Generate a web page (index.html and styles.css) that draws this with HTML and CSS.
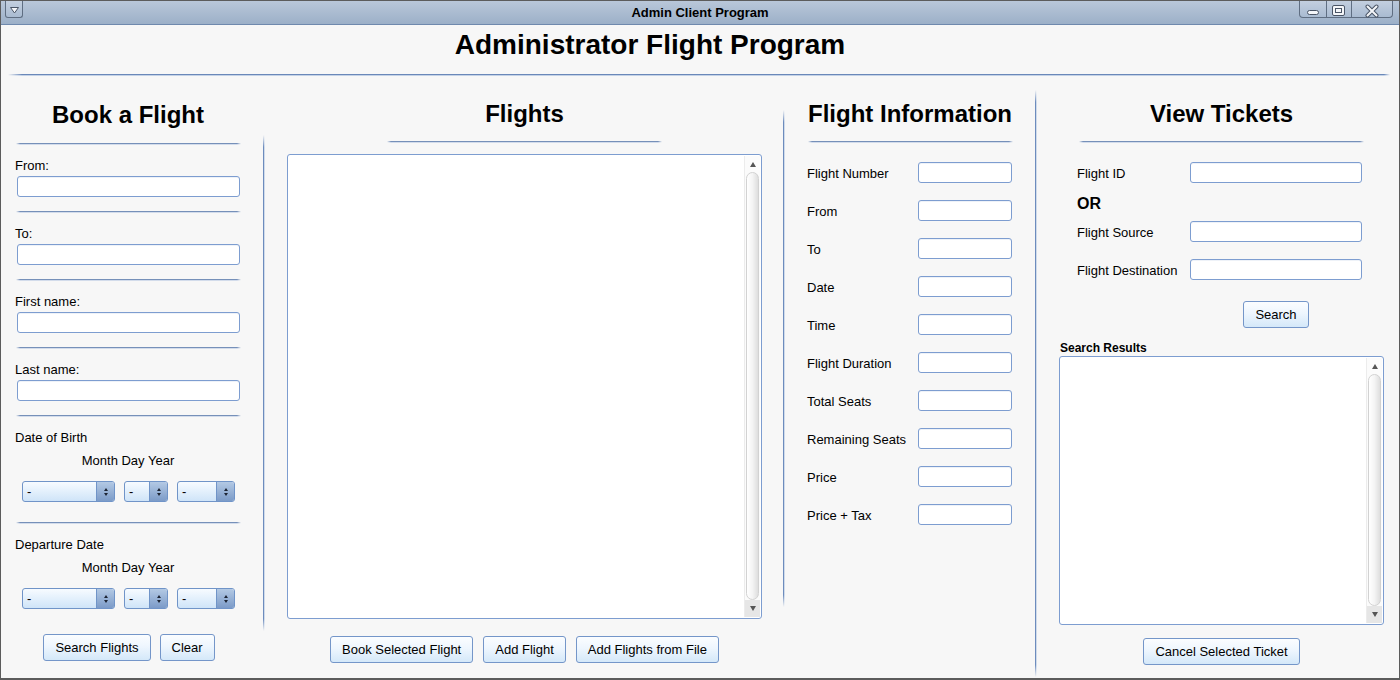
FILE: index.html
```html
<!DOCTYPE html>
<html>
<head>
<meta charset="utf-8">
<title>Admin Client Program</title>
<link rel="stylesheet" href="styles.css">
</head>
<body>
<div class="window">
  <div class="titlebar">
    <div class="tb-left">
      <div class="menu-btn">
        <svg width="16" height="17" viewBox="0 0 16 17"><polygon points="4.5,6.5 12.5,6.5 8.5,12" fill="#f4f6f9" stroke="#4a5566" stroke-width="1"/></svg>
      </div>
    </div>
    <div class="title">Admin Client Program</div>
    <div class="win-ctrls">
      <span class="ctrl c-min"><svg width="26" height="17" viewBox="0 0 26 17"><rect x="7.5" y="9.5" width="11" height="4" rx="2" fill="#f4f6f9" stroke="#4a5566"/></svg></span>
      <span class="ctrl c-max"><svg width="24" height="17" viewBox="0 0 24 17"><rect x="5.5" y="4.5" width="12" height="10" rx="1.5" fill="#f4f6f9" stroke="#4a5566"/><rect x="8.5" y="7.5" width="6" height="4" fill="none" stroke="#4a5566"/></svg></span>
      <span class="ctrl c-close"><svg width="40" height="17" viewBox="0 0 40 17"><path d="M15.5 5.5 L24.5 14.5 M24.5 5.5 L15.5 14.5" stroke="#4a5566" stroke-width="4" stroke-linecap="round"/><path d="M15.5 5.5 L24.5 14.5 M24.5 5.5 L15.5 14.5" stroke="#f4f6f9" stroke-width="2" stroke-linecap="round"/></svg></span>
    </div>
  </div>

  <div class="header">
    <h1>Administrator Flight Program</h1>
    <div class="hline"></div>
  </div>

  <div class="main">
    <section class="col col-book">
      <h2 class="heading">Book a Flight</h2>
      <div class="sep sep-first"></div>
      <div class="lbl">From:</div>
      <div class="inp inp-wide"></div>
      <div class="sep"></div>
      <div class="lbl">To:</div>
      <div class="inp inp-wide"></div>
      <div class="sep"></div>
      <div class="lbl">First name:</div>
      <div class="inp inp-wide"></div>
      <div class="sep"></div>
      <div class="lbl">Last name:</div>
      <div class="inp inp-wide"></div>
      <div class="sep"></div>
      <div class="lbl">Date of Birth</div>
      <div class="mdy">Month Day Year</div>
      <div class="selects">
        <div class="combo c-month"><span class="combo-val">-</span><span class="combo-arrow"><i class="tri-up"></i><i class="tri-down"></i></span></div>
        <div class="combo c-day"><span class="combo-val">-</span><span class="combo-arrow"><i class="tri-up"></i><i class="tri-down"></i></span></div>
        <div class="combo c-year"><span class="combo-val">-</span><span class="combo-arrow"><i class="tri-up"></i><i class="tri-down"></i></span></div>
      </div>
      <div class="sep sep-after-sel"></div>
      <div class="lbl">Departure Date</div>
      <div class="mdy">Month Day Year</div>
      <div class="selects">
        <div class="combo c-month"><span class="combo-val">-</span><span class="combo-arrow"><i class="tri-up"></i><i class="tri-down"></i></span></div>
        <div class="combo c-day"><span class="combo-val">-</span><span class="combo-arrow"><i class="tri-up"></i><i class="tri-down"></i></span></div>
        <div class="combo c-year"><span class="combo-val">-</span><span class="combo-arrow"><i class="tri-up"></i><i class="tri-down"></i></span></div>
      </div>
      <div class="btn-row book-btns">
        <button class="btn">Search Flights</button>
        <button class="btn">Clear</button>
      </div>
    </section>

    <div class="vline v1"></div>

    <section class="col col-flights">
      <h2 class="heading">Flights</h2>
      <div class="sep sep-flights"></div>
      <div class="listbox flights-list">
        <div class="list-body"></div>
        <div class="vscroll">
          <div class="sb-up"><i class="sb-tri-up"></i></div>
          <div class="sb-track"></div>
          <div class="sb-down"><i class="sb-tri-down"></i></div>
        </div>
      </div>
      <div class="btn-row flight-btns">
        <button class="btn">Book Selected Flight</button>
        <button class="btn">Add Flight</button>
        <button class="btn">Add Flights from File</button>
      </div>
    </section>

    <div class="vline v2"></div>

    <section class="col col-info">
      <h2 class="heading">Flight Information</h2>
      <div class="sep sep-info"></div>
      <div class="info-rows">
        <div class="info-row"><span>Flight Number</span><div class="inp inp-info"></div></div>
        <div class="info-row"><span>From</span><div class="inp inp-info"></div></div>
        <div class="info-row"><span>To</span><div class="inp inp-info"></div></div>
        <div class="info-row"><span>Date</span><div class="inp inp-info"></div></div>
        <div class="info-row"><span>Time</span><div class="inp inp-info"></div></div>
        <div class="info-row"><span>Flight Duration</span><div class="inp inp-info"></div></div>
        <div class="info-row"><span>Total Seats</span><div class="inp inp-info"></div></div>
        <div class="info-row"><span>Remaining Seats</span><div class="inp inp-info"></div></div>
        <div class="info-row"><span>Price</span><div class="inp inp-info"></div></div>
        <div class="info-row"><span>Price + Tax</span><div class="inp inp-info"></div></div>
      </div>
    </section>

    <div class="vline v3"></div>

    <section class="col col-tickets">
      <h2 class="heading">View Tickets</h2>
      <div class="sep sep-tickets"></div>
      <div class="t-row t-first"><span class="t-lbl">Flight ID</span><div class="inp inp-ticket"></div></div>
      <div class="or">OR</div>
      <div class="t-row t-src"><span class="t-lbl">Flight Source</span><div class="inp inp-ticket"></div></div>
      <div class="t-row t-dst"><span class="t-lbl">Flight Destination</span><div class="inp inp-ticket"></div></div>
      <div class="search-wrap"><button class="btn">Search</button></div>
      <div class="sr-label">Search Results</div>
      <div class="listbox results-list">
        <div class="list-body"></div>
        <div class="vscroll">
          <div class="sb-up"><i class="sb-tri-up"></i></div>
          <div class="sb-track"></div>
          <div class="sb-down"><i class="sb-tri-down"></i></div>
        </div>
      </div>
      <div class="btn-row cancel-row">
        <button class="btn">Cancel Selected Ticket</button>
      </div>
    </section>
  </div>
</div>
</body>
</html>
```

FILE: styles.css
```css
* { box-sizing: border-box; }

body {
  margin: 0;
  font-family: "Liberation Sans", Arial, sans-serif;
  font-size: 13px;
  color: #000;
  background: #f7f7f7;
}

.window {
  width: 1400px;
  height: 680px;
  border: 1px solid #5c5c5c;
  border-bottom-width: 2px;
  background: #f7f7f7;
  display: flex;
  flex-direction: column;
  overflow: hidden;
}

/* ---------- title bar ---------- */
.titlebar {
  flex: none;
  height: 24px;
  display: grid;
  grid-template-columns: 1fr auto 1fr;
  background: linear-gradient(#b9c7d9, #9cb0c8);
  border-bottom: 1px solid #6f89ad;
}
.tb-left { display: flex; }
.menu-btn {
  margin-left: 4px;
  width: 18px;
  height: 17px;
  border: 1px solid #5f6e82;
  border-top: none;
  border-radius: 0 0 3px 3px;
  background: linear-gradient(#c3cfdf, #a9bbd1);
}
.menu-btn svg { display: block; }
.title {
  font-weight: bold;
  font-size: 13px;
  line-height: 23px;
  color: #000;
}
.win-ctrls {
  justify-self: end;
  margin-right: 6px;
  display: flex;
  height: 17px;
  border: 1px solid #5f6e82;
  border-top: none;
  border-radius: 0 0 4px 4px;
  background: linear-gradient(#c3cfdf, #a9bbd1);
}
.ctrl { display: block; height: 16px; }
.ctrl svg { display: block; }
.c-min { width: 26px; }
.c-max { width: 25px; border-left: 1px solid #5f6e82; }
.c-close { width: 41px; border-left: 1px solid #5f6e82; }

/* ---------- header ---------- */
.header { flex: none; height: 51px; }
.header h1 {
  margin: 0;
  padding: 6px 100px 0 0;
  font-size: 28px;
  line-height: 28px;
  font-weight: bold;
  text-align: center;
}
.hline {
  margin: 15px 9px 0 7px;
  height: 2px;
  border-top: 1px solid #6a88b9;
  border-bottom: 1px solid #c4d2e6;
  -webkit-mask-image: linear-gradient(to right, transparent, #000 14px, #000 calc(100% - 6px), transparent);
  mask-image: linear-gradient(to right, transparent, #000 14px, #000 calc(100% - 6px), transparent);
}

/* ---------- main grid ---------- */
.main {
  flex: 1;
  display: grid;
  grid-template-columns: 262px 2px 518px 2px 250px 2px 1fr;
  align-items: start;
}

.vline {
  width: 2px;
  border-left: 1px solid #6d8cbd;
  border-right: 1px solid #d0dbea;
  -webkit-mask-image: linear-gradient(to bottom, transparent, #000 12px, #000 calc(100% - 12px), transparent);
  mask-image: linear-gradient(to bottom, transparent, #000 12px, #000 calc(100% - 12px), transparent);
}
.v1 { margin-top: 59px; height: 496px; }
.v2 { margin-top: 34px; height: 497px; }
.v3 { margin-top: 14px; height: 587px; }

.col { display: flex; flex-direction: column; }

.heading {
  margin: 0;
  font-size: 24px;
  line-height: 28px;
  font-weight: bold;
  text-align: center;
}

.sep {
  height: 2px;
  border-top: 1px solid #7690b9;
  border-bottom: 1px solid #d3dceb;
  -webkit-mask-image: linear-gradient(to right, transparent, #000 4px, #000 calc(100% - 4px), transparent);
  mask-image: linear-gradient(to right, transparent, #000 4px, #000 calc(100% - 4px), transparent);
}

.inp {
  height: 21px;
  background: #fff;
  border: 1px solid #7d9dd0;
  border-radius: 3px;
  box-shadow: inset 0 1px 0 #eef2f8;
}

.btn {
  font-family: "Liberation Sans", Arial, sans-serif;
  font-size: 13px;
  color: #000;
  height: 27px;
  padding: 0 11px;
  border: 1px solid #7496c9;
  border-radius: 3px;
  background: linear-gradient(#fbfdff 0%, #eef6fe 45%, #d4e8f9 100%);
  line-height: 25px;
  margin: 0;
}

.btn-row { display: flex; justify-content: center; gap: 9px; }

/* ---------- column 1: book ---------- */
.col-book { padding: 26px 0 0 14px; width: 240px; }
.col-book .heading { margin-top: -1px; }
.col-book .sep { margin: 14px 0 0 1px; width: 225px; }
.col-book .sep-after-sel { margin-top: 20px; }
.lbl { margin-top: 13px; line-height: 16px; height: 16px; }
.inp-wide { margin: 2px 0 0 2px; width: 223px; }
.mdy { margin-top: 7px; line-height: 16px; text-align: center; width: 226px; }
.selects { margin-top: 12px; padding-left: 7px; display: flex; gap: 9px; }

.combo {
  height: 21px;
  display: flex;
  border: 1px solid #7094c8;
  border-radius: 3px;
  background: linear-gradient(#f7fbff, #e3f0fc 50%, #cfe4f8);
  overflow: hidden;
}
.c-month { width: 93px; }
.c-day { width: 44px; }
.c-year { width: 58px; }
.combo-val { flex: 1; padding-left: 4px; line-height: 19px; font-size: 13px; }
.combo-arrow {
  width: 18px;
  border-left: 1px solid #7094c8;
  background: linear-gradient(#b3c9e4, #7c9bc8);
  display: flex;
  flex-direction: column;
  align-items: center;
  justify-content: center;
  gap: 2px;
}
.tri-up {
  width: 0; height: 0;
  border-left: 2.5px solid transparent;
  border-right: 2.5px solid transparent;
  border-bottom: 3px solid #1c2433;
}
.tri-down {
  width: 0; height: 0;
  border-left: 2.5px solid transparent;
  border-right: 2.5px solid transparent;
  border-top: 3px solid #1c2433;
}
.book-btns { margin-top: 25px; width: 226px; padding-left: 2px; }

/* ---------- column 2: flights ---------- */
.col-flights { padding: 24px 21px 0 22px; }
.sep-flights { margin: 13px auto 0; width: 275px; }

.listbox {
  display: flex;
  background: #fff;
  border: 1px solid #7d9dd0;
  border-radius: 3px;
}
.flights-list { margin-top: 11px; height: 465px; }
.list-body { flex: 1; }
.vscroll {
  width: 16px;
  margin: 1px 1px 1px 0;
  display: flex;
  flex-direction: column;
  background: #fbfbfb;
  border-left: 1px solid #ececec;
}
.sb-up {
  height: 16px;
  display: flex;
  align-items: center;
  justify-content: center;
}
.sb-track {
  flex: 1;
  margin: 0 1px 0 1px;
  border: 1px solid #d2d2d2;
  border-radius: 7px;
  background: linear-gradient(to right, #ffffff, #f4f4f4 50%, #dedede);
}
.sb-down {
  height: 17px;
  background: #e6e6e6;
  display: flex;
  align-items: center;
  justify-content: center;
}
.sb-tri-up {
  width: 0; height: 0;
  border-left: 3.5px solid transparent;
  border-right: 3.5px solid transparent;
  border-bottom: 5px solid #555;
}
.sb-tri-down {
  width: 0; height: 0;
  border-left: 3.5px solid transparent;
  border-right: 3.5px solid transparent;
  border-top: 5px solid #555;
}
.flight-btns { margin-top: 17px; gap: 10px; }

/* ---------- column 3: info ---------- */
.col-info { padding: 24px 0 0 22px; width: 228px; }
.col-info .heading { width: 206px; }
.sep-info { margin: 13px 0 0 1px; width: 205px; }
.info-rows { margin-top: 19px; display: flex; flex-direction: column; gap: 17px; width: 205px; }
.info-row { display: flex; justify-content: space-between; align-items: center; height: 21px; }
.info-row span { padding-top: 2px; line-height: 16px; }
.inp-info { width: 94px; }

/* ---------- column 4: tickets ---------- */
.col-tickets { padding: 24px 15px 0 22px; }
.sep-tickets { margin: 13px auto 0; width: 285px; }
.t-row { display: flex; align-items: center; height: 21px; padding-left: 18px; }
.t-lbl { width: 113px; padding-top: 2px; line-height: 16px; }
.inp-ticket { width: 172px; }
.t-first { margin-top: 19px; }
.or {
  margin-top: 12px;
  padding-left: 18px;
  font-size: 16px;
  font-weight: bold;
  line-height: 18px;
}
.t-src { margin-top: 8px; }
.t-dst { margin-top: 17px; }
.search-wrap { margin: 21px 0 0 131px; width: 172px; display: flex; justify-content: center; }
.sr-label {
  margin-top: 13px;
  padding-left: 1px;
  font-size: 12px;
  font-weight: bold;
  line-height: 14px;
}
.results-list { margin-top: 1px; height: 269px; }
.cancel-row { margin-top: 13px; }
```
